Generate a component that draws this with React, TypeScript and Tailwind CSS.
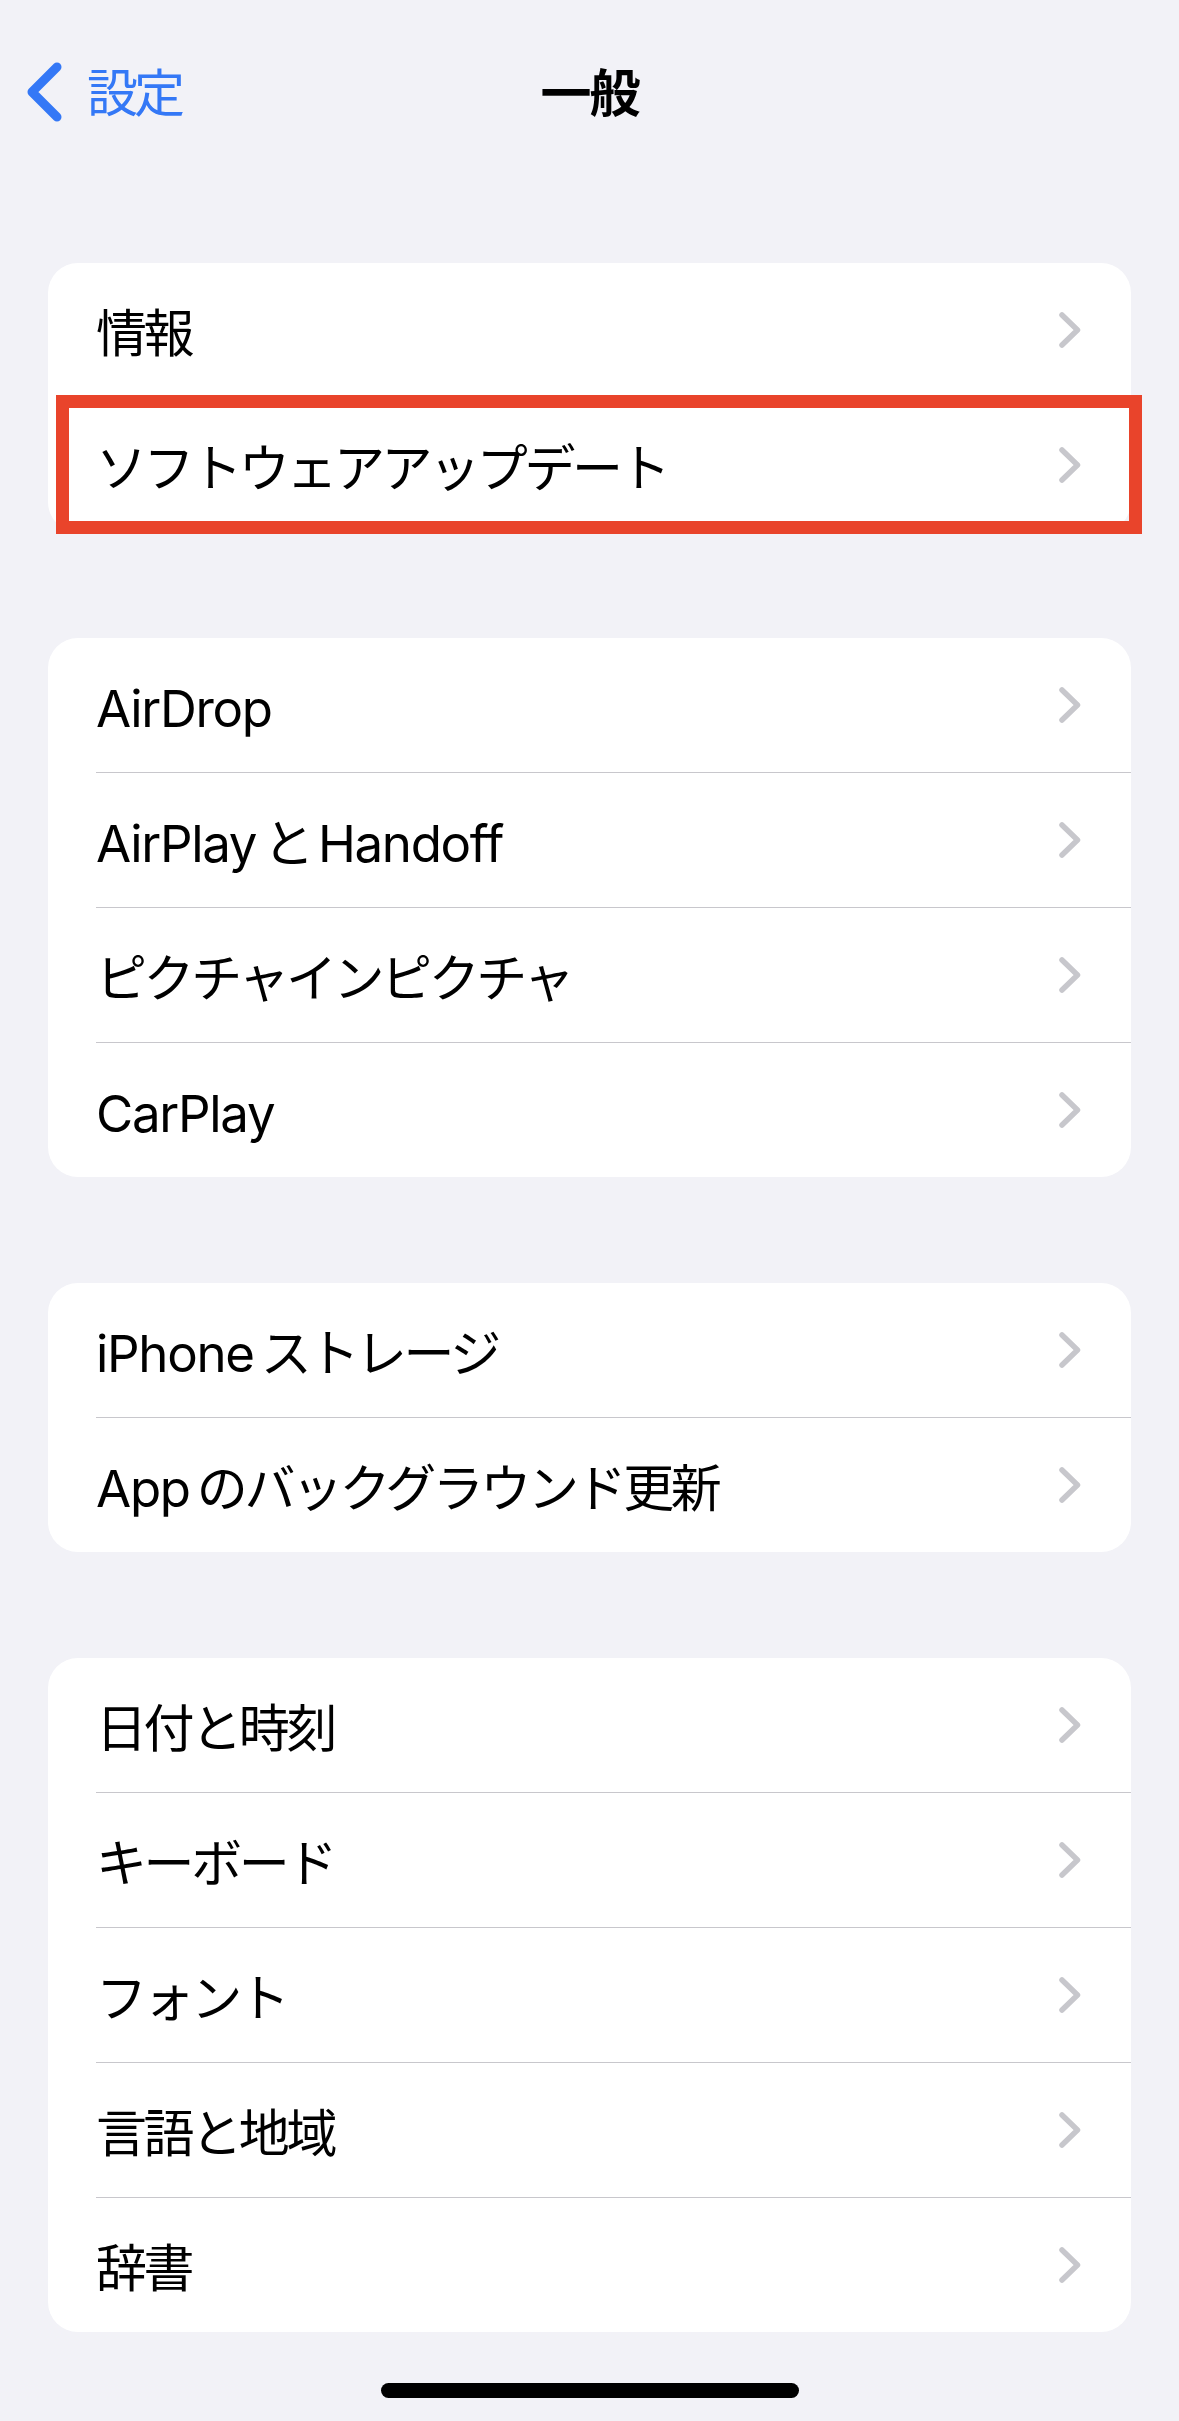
import React from 'react';

type Row = { label: string };

const groups: Row[][] = [
  [{ label: '情報' }, { label: 'ソフトウェアアップデート' }],
  [
    { label: 'AirDrop' },
    { label: 'AirPlay と Handoff' },
    { label: 'ピクチャインピクチャ' },
    { label: 'CarPlay' },
  ],
  [{ label: 'iPhone ストレージ' }, { label: 'App のバックグラウンド更新' }],
  [
    { label: '日付と時刻' },
    { label: 'キーボード' },
    { label: 'フォント' },
    { label: '言語と地域' },
    { label: '辞書' },
  ],
];

// latin runs and japanese runs get different tracking (SF / Hiragino are tighter)
const Label = ({ text }: { text: string }) => (
  <>
    {text
      .split(/([A-Za-z ]+)/)
      .filter((part) => part !== '')
      .map((part, i) =>
        /[A-Za-z]/.test(part) ? (
          <span key={i} className="tracking-[-1.3px] [word-spacing:-6px]">
            {part}
          </span>
        ) : (
          <span key={i} className="tracking-[-3.4px]">
            {part}
          </span>
        ),
      )}
  </>
);

const Chevron = () => (
  <svg width="24" height="38" viewBox="0 0 24 38" fill="none">
    <polyline
      points="4,4 19.5,19 4,34"
      stroke="#C7C7CC"
      strokeWidth="5.5"
      strokeLinecap="round"
      strokeLinejoin="round"
    />
  </svg>
);

const BackChevron = () => (
  <svg width="36" height="60" viewBox="0 0 36 60" fill="none">
    <polyline
      points="31,5 6,30 31,55"
      stroke="#3478F6"
      strokeWidth="9"
      strokeLinecap="round"
      strokeLinejoin="round"
    />
  </svg>
);

const Group = ({ rows, highlight }: { rows: Row[]; highlight?: number }) => (
  <div className="relative mx-[48px]">
    <div className="rounded-[30px] overflow-hidden bg-white">
      {rows.map((row, i) => {
        const last = i === rows.length - 1;
        return (
          <div key={row.label} className="pl-[48px]">
            <div
              className={
                last
                  ? 'flex h-[134px] items-center justify-between pr-[49px]'
                  : 'flex h-[135px] items-center justify-between pr-[49px] border-b border-[#C8C7CC]'
              }
            >
              <span className="pt-[7px] text-[51px] leading-[62px] text-black whitespace-pre">
                <Label text={row.label} />
              </span>
              <Chevron />
            </div>
          </div>
        );
      })}
    </div>
    {highlight !== undefined && (
      // red annotation frame laid over the highlighted row
      <div className="absolute left-[8px] top-[132px] w-[1086px] h-[139px] border-[13px] border-[#E9442B]" />
    )}
  </div>
);

export default function App() {
  return (
    <div
      className="min-h-[2421px] bg-[#F2F2F7] flex flex-col"
      style={{ fontFamily: '"Inter", "Noto Sans CJK JP", sans-serif' }}
    >
      <div className="grid grid-cols-[1fr_auto_1fr] items-center h-[184px]">
        <div className="flex items-center pl-[26px] gap-[25px]">
          <BackChevron />
          <span className="text-[51px] leading-[62px] text-[#3478F6] pt-[4px] tracking-[-4px]">設定</span>
        </div>
        <h1 className="text-[51px] leading-[62px] font-semibold text-black pt-[4px] tracking-[-2px]">一般</h1>
        <div />
      </div>

      <div className="mt-[79px] flex flex-col gap-[106px]">
        {groups.map((rows, i) => (
          <Group key={i} rows={rows} highlight={i === 0 ? 1 : undefined} />
        ))}
      </div>

      <div className="mt-[51px] mx-auto w-[418px] h-[15px] rounded-full bg-black" />
    </div>
  );
}
